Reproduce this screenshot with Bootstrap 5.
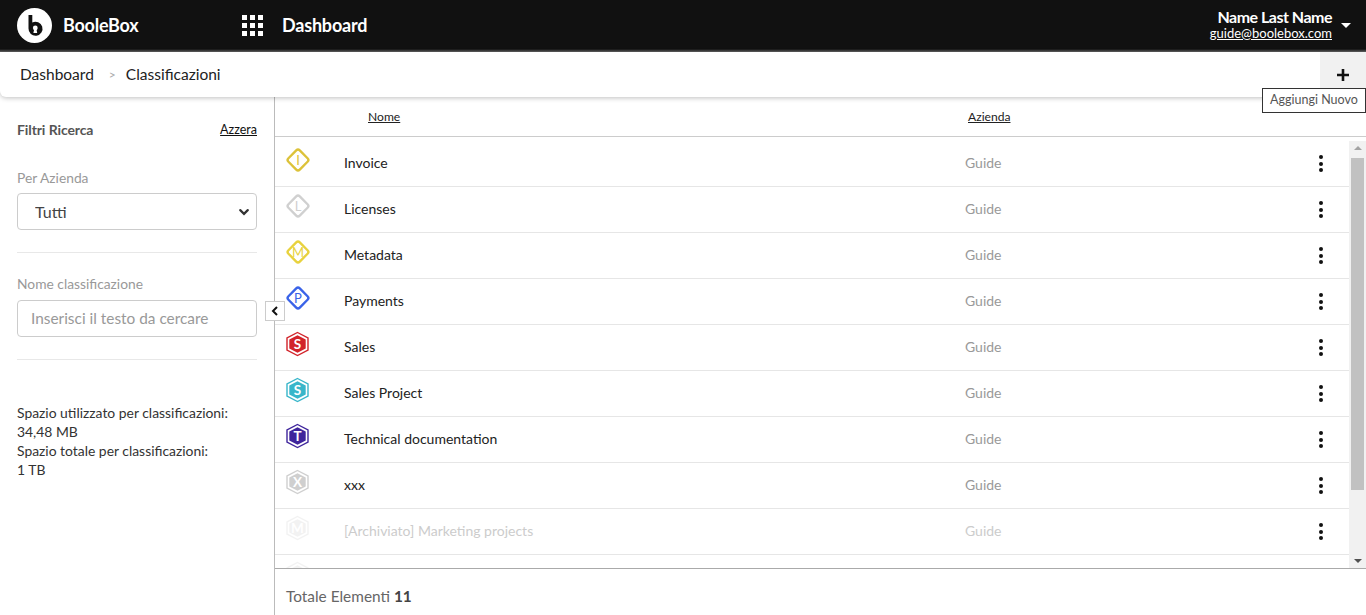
<!DOCTYPE html>
<html lang="it"><head><meta charset="utf-8"><title>BooleBox</title>
<link href="https://cdn.jsdelivr.net/npm/bootstrap@5.3.0/dist/css/bootstrap.min.css" rel="stylesheet">
<style>
html,body{height:615px;overflow:hidden}
body{font-family:Lato,"Liberation Sans",sans-serif;font-size:14px;color:#222;background:#fff}
.app-shell{height:615px}
.top-bar{height:52px;background:linear-gradient(#111 calc(100% - 3px),#666);color:#fff;padding:0 0 2px 17px;flex:none}
.brand-text{font-size:18px;font-weight:700;margin-left:11px;width:179px;letter-spacing:-.25px}
.page-title{font-size:18px;font-weight:700;margin-left:19px;letter-spacing:-.2px}
.apps-grid{display:grid;grid-template-columns:repeat(3,5px);gap:3px}
.apps-grid i{width:5px;height:5px;background:#fff;display:block}
.user-box{line-height:17px;text-align:right;margin-right:7px}
.user-name{font-size:16px;font-weight:700;letter-spacing:-.5px;margin-top:-1px}
.user-mail{font-size:13px;color:#fff;display:block}
.user-caret{width:0;height:0;border:5px solid transparent;border-top:5px solid #fff;border-bottom:0;margin-right:15px;margin-left:2px}
.crumb-bar{height:45px;background:#fff;border-radius:0 0 0 6px;box-shadow:0 1px 5px rgba(0,0,0,.25);padding:0 0 0 20px;position:relative;z-index:3;flex:none;font-size:15.5px;color:#222}
.crumb-sep{color:#aaa;font-size:12px;margin:0 10px 0 15px}
.add-btn{margin-left:auto;width:46px;height:45px;background:#f1f1f1;border:0;padding:0;display:flex;align-items:center;justify-content:center}
.add-tip{position:absolute;right:0;top:36px;width:104px;height:25px;background:#fff;border:1px solid #333;font-size:12.5px;color:#555;display:flex;align-items:center;justify-content:center;z-index:5}
.work-area{min-height:0;position:relative}
.side-panel{width:275px;flex:none;border-right:1px solid #bbb;padding:0 17px}
.filter-head{height:24px;margin-top:21px;margin-bottom:27px}
.filter-title{font-size:14px;font-weight:700;color:#555;letter-spacing:-.1px;margin-bottom:2px}
.filter-reset{font-size:12.5px;color:#111}
.filter-label{font-size:13.8px;color:#999;line-height:17px;margin-bottom:7px}
.name-label{margin-bottom:8px}
.side-panel .form-select,.side-panel .form-control{height:37px;font-size:16px;border-color:#ccc;border-radius:4px;color:#444;background-color:#fff}
.side-panel .form-select{padding-left:17px;background-size:10px;background-position:right 7px center;background-image:url("data:image/svg+xml,%3csvg xmlns='http://www.w3.org/2000/svg' viewBox='0 0 16 16'%3e%3cpath fill='none' stroke='%23333' stroke-linecap='round' stroke-width='3.4' d='M2 5l6 6 6-6'/%3e%3c/svg%3e")}
.side-panel .form-control{padding:0 0 2px 13px}
.side-panel .form-control::placeholder{color:#999;opacity:1;font-size:15.4px}
.side-rule{border:0;border-top:1px solid #e8e8e8;margin:22px 0;opacity:1}
.usage-info{line-height:19px;color:#333;font-size:13.9px;margin-top:43px}
.collapse-tab{position:absolute;left:265px;top:204px;width:20px;height:20px;background:#fff;border:1px solid #ccc;padding:0;display:flex;align-items:center;justify-content:center;z-index:2}
.list-head{height:40px;border-bottom:1px solid #ccc;font-size:12.1px;flex:none;padding-left:93px;padding-top:1px}
.list-head a{color:#222}
.head-name{width:600px}
.list-body{min-height:0;overflow:hidden}
.rows-wrap{flex:1 1 auto;padding-top:4px;overflow:hidden;min-width:0}
.data-row{height:46px;border-bottom:1px solid #e6e6e6;padding:0 0 2px 10px;flex:none}
.row-icon{width:59px;flex:none;margin-top:-5px;display:flex}
.row-name{width:621px;font-size:14px;color:#222}
.row-owner{width:340px;color:#999;font-size:14px}
.row-menu{width:32px;display:flex;justify-content:center;margin-top:2px}
.row-menu i{display:block;width:4px;height:4px;border-radius:50%;background:#111;margin:2.5px 0}
.faded .row-icon{opacity:.12}
.faded .row-name{color:#ccc}
.faded .row-owner{color:#ccc}
.scroll-track{width:17px;flex:none;background:#f1f1f1;margin-top:4px;align-items:center}
.scroll-up,.scroll-down{width:0;height:0;border:4px solid transparent;flex:none}
.scroll-up{border-bottom:4px solid #a3a3a3;border-top:0;margin-top:5px;margin-bottom:8px}
.scroll-thumb{width:13px;height:332px;background:#c1c1c1;flex:none}
.scroll-down{border-top:4px solid #505050;border-bottom:0;margin-top:auto;margin-bottom:5px}
.list-foot{height:47px;border-top:1px solid #aaa;flex:none;padding:10px 0 0 11px;font-size:15.4px;color:#666}
.list-foot b{color:#444}
</style></head><body>
<div class="app-shell d-flex flex-column">
 <header class="top-bar d-flex align-items-center">
  <svg width="35" height="35" viewBox="0 0 35 35"><circle cx="17.5" cy="17.5" r="17.5" fill="#fff"/><path d="M11.500 7h3.800v7.500a7 7 0 1 1-3.800 6z" fill="#111"/><circle cx="18.300" cy="20" r="2.400" fill="#fff"/><path d="M17.200 21h2.200l.8 4h-3.800z" fill="#fff"/></svg>
  <span class="brand-text">BooleBox</span>
  <span class="apps-grid" aria-hidden="true"><i></i><i></i><i></i><i></i><i></i><i></i><i></i><i></i><i></i></span>
  <span class="page-title">Dashboard</span>
  <div class="ms-auto d-flex align-items-center">
   <div class="user-box"><div class="user-name">Name Last Name</div><a class="user-mail" href="#">guide@boolebox.com</a></div>
   <span class="user-caret"></span>
  </div>
 </header>
 <nav class="crumb-bar d-flex align-items-center">
  <span>Dashboard</span><span class="crumb-sep">&gt;</span><span>Classificazioni</span>
  <button class="add-btn" aria-label="Aggiungi"><svg width="14" height="14" viewBox="0 0 14 14"><path d="M7 1v12M1 7h12" stroke="#111" stroke-width="2.6"/></svg></button>
  <div class="add-tip">Aggiungi Nuovo</div>
 </nav>
 <main class="work-area d-flex flex-grow-1">
  <aside class="side-panel">
   <div class="filter-head d-flex justify-content-between align-items-center"><span class="filter-title">Filtri Ricerca</span><a class="filter-reset" href="#">Azzera</a></div>
   <div class="filter-label">Per Azienda</div>
   <select class="form-select"><option>Tutti</option></select>
   <hr class="side-rule">
   <div class="filter-label name-label">Nome classificazione</div>
   <input class="form-control" placeholder="Inserisci il testo da cercare">
   <hr class="side-rule">
   <div class="usage-info">Spazio utilizzato per classificazioni:<br>34,48 MB<br>Spazio totale per classificazioni:<br>1 TB</div>
  </aside>
  <button class="collapse-tab" aria-label="Comprimi"><svg width="10" height="10" viewBox="0 0 10 10"><path d="M7 1 3 5l4 4" fill="none" stroke="#111" stroke-width="2"/></svg></button>
  <section class="d-flex flex-column flex-grow-1" style="min-width:0">
   <div class="list-head d-flex align-items-center"><a class="head-name" href="#">Nome</a><a href="#">Azienda</a></div>
   <div class="list-body d-flex flex-grow-1">
    <div class="rows-wrap" id="rows"></div>
    <div class="scroll-track d-flex flex-column"><span class="scroll-up"></span><span class="scroll-thumb"></span><span class="scroll-down"></span></div>
   </div>
   <div class="list-foot d-flex align-items-center"><span>Totale Elementi <b>11</b></span></div>
  </section>
 </main>
</div>
<script>
var data=[
['Invoice','d','#dcc23a','I',0],['Licenses','d','#d0d0d0','L',0],['Metadata','d','#e8d23e','M',0],['Payments','d','#3a63e8','P',0],
['Sales','h','#d2232a','S',0],['Sales Project','h','#38b6ca','S',0],['Technical documentation','h','#3f259c','T',0],['xxx','h','#cfcfcf','X',0],
['[Archiviato] Marketing projects','h','#999','M',1],['','h','#999','',2]];
function icon(t,c,l){
 if(t==='d') return '<svg width="26" height="26" viewBox="0 0 26 26"><rect x="5" y="5" width="16" height="16" rx="2.500" transform="rotate(45 13 13)" fill="#fff" stroke="'+c+'" stroke-width="2.400"/><text x="13" y="17.500" text-anchor="middle" font-size="13" font-family="Lato,sans-serif" fill="'+c+'">'+l+'</text></svg>';
 return '<svg width="24" height="26" viewBox="-.5 0 24 26"><path d="M12 1.500 22.500 7v12L12 24.500 1.500 19V7z" fill="none" stroke="'+c+'" stroke-width="1.400"/><path d="M12 4.200 20.200 8.600v8.800L12 21.800 3.800 17.400V8.600z" fill="'+c+'"/><text x="12" y="17.500" text-anchor="middle" font-size="13.5" font-weight="700" font-family="Lato,sans-serif" fill="#fff">'+l+'</text></svg>';
}
document.getElementById('rows').innerHTML=data.map(function(r){
 return '<div class="data-row d-flex align-items-center'+(r[4]?' faded':'')+'"><span class="row-icon">'+icon(r[1],r[2],r[3])+'</span><span class="row-name">'+r[0]+'</span><span class="row-owner">'+(r[4]===2?'':'Guide')+'</span>'+(r[4]===2?'':'<span class="row-menu"><span><i></i><i></i><i></i></span></span>')+'</div>';
}).join('');
</script>
<script src="https://cdn.jsdelivr.net/npm/bootstrap@5.3.0/dist/js/bootstrap.bundle.min.js"></script>
</body></html>
